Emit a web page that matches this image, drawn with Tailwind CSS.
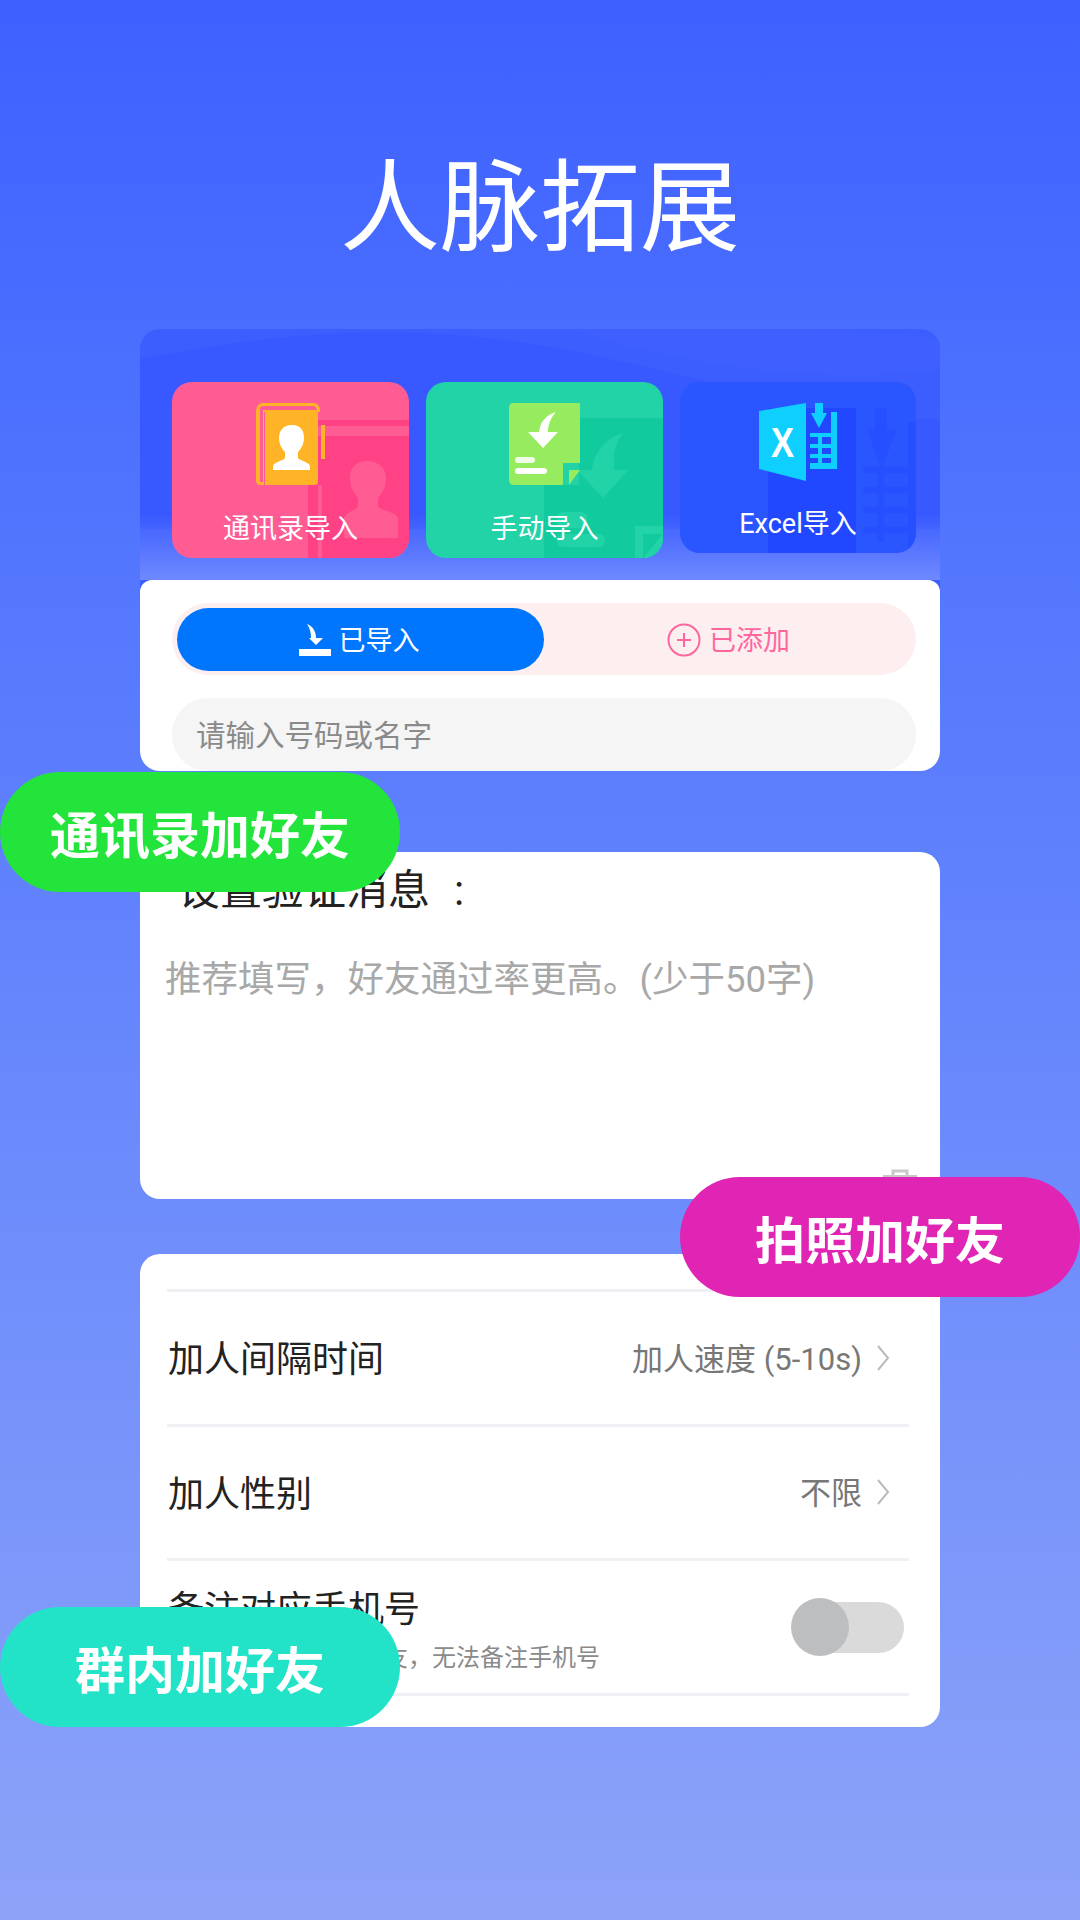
<!doctype html>
<html lang="zh-CN">
<head>
<meta charset="utf-8">
<script src="https://cdn.jsdelivr.net/npm/@tailwindcss/browser@4"></script>
</head>
<body>
<div class="relative w-[1080px] h-[1920px] overflow-hidden bg-linear-to-b from-[#3D60FF] to-[#8DA3F8] pt-[160px] font-[family-name:Roboto,'Noto_Sans_CJK_SC',sans-serif]">
  <h1 class="text-center text-white text-[100px] leading-[98px] font-normal">人脉拓展</h1>

  <!-- card 1 -->
  <section class="relative ml-[140px] mt-[71px] w-[800px] h-[442px] rounded-[20px] overflow-hidden bg-[#3C5EFF]">
    <svg class="absolute left-0 top-0" width="800" height="251" viewBox="0 0 800 251">
      <defs>
        <linearGradient id="fade" x1="0" y1="0" x2="0" y2="1">
          <stop offset="0" stop-color="#6F89FF" stop-opacity="0"/>
          <stop offset="1" stop-color="#6F89FF" stop-opacity="1"/>
        </linearGradient>
      </defs>
      <path d="M0 30 C200 -10 340 0 470 30 C590 55 690 90 800 90 V200 H0 Z" fill="#3859FF"/>
      <path d="M430 0 C500 -5 700 -5 800 10 V40 C680 60 520 30 430 0 Z" fill="#3F60FF"/>
      <rect x="0" y="185" width="800" height="66" fill="url(#fade)"/>
    </svg>
    <div class="relative flex items-start gap-[17px] pl-[32px] pt-[53px]">
      <!-- tile 1 -->
      <div class="relative w-[237px] h-[176px] rounded-[20px] overflow-hidden bg-[#FF5C94] flex flex-col items-center pt-[21px]">
        <svg class="absolute left-0 top-0" width="237" height="176" viewBox="0 0 237 176">
          <path d="M146 38 H237 V176 H136 V103 H146 Z" fill="#FF4285"/>
          <rect x="146" y="44" width="91" height="10" fill="#FF5C94"/>
          <rect x="146" y="103" width="4" height="73" fill="#FF5C94"/>
          <path d="M195 79 C183 79 178 87 178 96 C178 105 182 112 186 116 L186 124 C186 128 173 130 172 136 V156 H226 V136 C225 130 206 128 206 124 L206 116 C210 112 214 105 214 96 C214 87 207 79 195 79 Z" fill="#FF5C94"/>
        </svg>
        <svg class="relative" width="70" height="82" viewBox="84 21 70 82">
          <path d="M84 30 Q84 21 92 21 H142 Q146 21 148 27 V30 H92 V103 H88 Q84 103 84 98 Z" fill="#FFB428"/>
          <path d="M88 26 Q88 24 92 24 H141 Q144 24 145 28 H91 V100 H88 Z" fill="#FF5C94"/>
          <path d="M93 30 H146 V99 Q146 103 142 103 H93 Z" fill="#FFB428"/>
          <rect x="149" y="43" width="4" height="34" fill="#FFB428"/>
          <path d="M120 43 C111 43 107 49 107 56 C107 62 110 67 113 70 L113 76 C113 78 102 80 101 84 V88 H138 V84 C137 80 126 78 126 76 L126 70 C129 67 132 62 132 56 C132 49 129 43 120 43 Z" fill="#FFFFFF"/>
        </svg>
        <span class="relative mt-[29px] text-white text-[27px] leading-[30px]">通讯录导入</span>
      </div>
      <!-- tile 2 -->
      <div class="relative w-[237px] h-[176px] rounded-[20px] overflow-hidden bg-[#22D3A8] flex flex-col items-center pt-[21px]">
        <svg class="absolute left-0 top-0" width="237" height="176" viewBox="0 0 237 176">
          <path d="M153 36 H237 V176 H118 V103 H153 Z" fill="#11CB9E"/>
          <path d="M151 88 H166 C168 70 180 56 197 51 C188 62 187 75 188 88 H202 L177 116 Z" fill="#22D3A8"/>
          <rect x="131" y="130" width="30" height="16" rx="6" fill="#22D3A8"/>
          <rect x="131" y="152" width="48" height="13" rx="6" fill="#22D3A8"/>
          <path d="M209 144 H237 V176 H209 Z M217 152 V176 L237 152 Z" fill="#22D3A8" fill-rule="evenodd"/>
        </svg>
        <svg class="relative" width="71" height="82" viewBox="82 21 71 82">
          <path d="M86 21 H153 V81 H136 V103 H87 Q82 103 82 98 V26 Q82 21 86 21 Z" fill="#96EB5F"/>
          <path d="M142 88 H153 L142 103 Z" fill="#96EB5F"/>
          <path d="M101 50 H112 C113 40 119 33 129 30 C123 37 121 43 121 50 H131 L116 66 Z" fill="#FFFFFF"/>
          <rect x="88" y="75" width="20" height="6" rx="3" fill="#FFFFFF" fill-opacity=".85"/>
          <rect x="88" y="86" width="32" height="6" rx="3" fill="#FFFFFF"/>
        </svg>
        <span class="relative mt-[29px] text-white text-[27px] leading-[30px]">手动导入</span>
      </div>
      <!-- tile 3 -->
      <div class="relative w-[236px] h-[171px] rounded-[20px] overflow-hidden bg-[#2A56FF] flex flex-col items-center pt-[21px]">
        <svg class="absolute left-0 top-0" width="236" height="171" viewBox="0 0 236 171">
          <rect x="88" y="26" width="88" height="145" fill="#2248FF"/>
          <path d="M195 26 H207 V47 H217 L201 88 L187 47 H195 Z" fill="#2650FF"/>
          <path d="M183 88 H228 M183 108 H228 M183 128 H228 M183 148 H228 M201 88 V160" stroke="#2650FF" stroke-width="7" fill="none"/>
          <rect x="228" y="40" width="8" height="131" fill="#2650FF"/>
        </svg>
        <svg class="relative" width="78" height="78" viewBox="78 21 78 78">
          <path d="M78 29 L125 21 V99 L78 87 Z" fill="#0FCFFF"/>
          <text x="90" y="75" font-family="Liberation Sans" font-weight="700" font-size="43" fill="#FFFFFF" textLength="23" lengthAdjust="spacingAndGlyphs">X</text>
          <path d="M134 21 H142 V31 H146 L138 46 L130 31 H134 Z" fill="#0FCFFF"/>
          <path d="M129 53 H150 M129 64 H150 M129 74 H150 M139 51 V84" stroke="#0FCFFF" stroke-width="4" fill="none"/>
          <path d="M150 30 H156 V87 H129 V81 H150 Z" fill="#0FCFFF"/>
        </svg>
        <span class="relative mt-[28px] text-white text-[27px] leading-[30px]">Excel导入</span>
      </div>
    </div>
    <!-- white body -->
    <div class="absolute left-0 right-0 bottom-0 h-[191px] rounded-t-[12px] bg-white pl-[32px] pr-[24px] pt-[23px]">
      <div class="flex h-[72px] rounded-[36px] bg-[#FDEFEF] pl-[5px] pt-[5px] pb-[4px]">
        <div class="flex w-[367px] items-center justify-center gap-[8px] rounded-[32px] bg-[#0076FF] pr-[3px] text-white text-[27px]">
          <svg width="32" height="32" viewBox="0 0 32 32">
            <path d="M8 0 C14 2 17 8 17 14 H24 L17 21 L10 14 H12 C12 9 11 4 8 0 Z" fill="#FFFFFF"/>
            <rect x="0" y="25" width="32" height="7" fill="#FFFFFF"/>
          </svg>
          <span class="pt-[3px]">已导入</span>
        </div>
        <div class="flex flex-1 items-center justify-center gap-[8px] pr-[3px] text-[#FF66A0] text-[27px]">
          <svg width="34" height="34" viewBox="0 0 34 34" fill="none" stroke="#FF66A0" stroke-width="2">
            <circle cx="17" cy="17" r="15.5"/>
            <path d="M10 17 H24 M17 10 V24"/>
          </svg>
          <span class="pt-[3px]">已添加</span>
        </div>
      </div>
      <div class="mt-[23px] flex h-[73px] items-center rounded-[36px] bg-[#F5F5F5] pl-[24px] pt-[3px] text-[29.5px] text-[#8A8A8A]">请输入号码或名字</div>
    </div>
  </section>

  <!-- card 2 -->
  <section class="relative ml-[140px] mt-[81px] w-[800px] h-[347px] rounded-[20px] overflow-hidden bg-white pt-[18px]">
    <p class="pl-[38px] text-[42px] leading-[42px] text-[#222222]">设置验证消息<span class="ml-[24px]">:</span></p>
    <p class="mt-[46px] pl-[25px] text-[36.5px] leading-[44px] text-[#A8A8A8]">推荐填写，好友通过率更高。(少于50字)</p>
    <svg class="absolute left-[743px] top-[317px]" width="34" height="30" viewBox="0 0 34 30" fill="none" stroke="#C8C8C8" stroke-width="3">
      <path d="M0 7.5 H34 M10 7 V2 H24 V7"/>
    </svg>
  </section>

  <!-- card 3 -->
  <section class="ml-[140px] mt-[55px] w-[800px] h-[473px] rounded-[20px] overflow-hidden bg-white pl-[27px] pr-[31px] pt-[35px]">
    <div class="h-[3px] bg-[#EEF0F3]"></div>
    <div class="flex h-[134.6px] items-center justify-between border-b-[3px] border-[#EEF0F3] pl-[1px] pr-[19px]">
      <span class="pt-[5px] text-[36px] text-[#222222]">加人间隔时间</span>
      <span class="flex items-center gap-[14px] text-[31px] text-[#777777]"><span class="pt-[4px]">加人速度 (5-10s)</span>
        <svg width="14" height="26" viewBox="0 0 14 26" fill="none" stroke="#BBBBBB" stroke-width="2"><path d="M2 1 L12 13 L2 25"/></svg>
      </span>
    </div>
    <div class="flex h-[134.6px] items-center justify-between border-b-[3px] border-[#EEF0F3] pl-[1px] pr-[19px]">
      <span class="pt-[5px] text-[36px] text-[#222222]">加人性别</span>
      <span class="flex items-center gap-[14px] text-[31px] text-[#777777]"><span class="pt-[4px]">不限</span>
        <svg width="14" height="26" viewBox="0 0 14 26" fill="none" stroke="#BBBBBB" stroke-width="2"><path d="M2 1 L12 13 L2 25"/></svg>
      </span>
    </div>
    <div class="flex h-[134.6px] items-center justify-between border-b-[3px] border-[#EEF0F3] pl-[1px] pr-[5px]">
      <div class="flex flex-col pt-[8px]">
        <span class="text-[36px] leading-[42px] text-[#222222]">备注对应手机号</span>
        <span class="mt-[12px] pl-[216px] text-[24px] leading-[30px] text-[#8A8A8A]">友，无法备注手机号</span>
      </div>
      <div class="relative h-[58px] w-[113px]">
        <div class="absolute left-[14px] right-0 top-[4px] h-[51px] rounded-full bg-[#DADADA]"></div>
        <div class="absolute left-0 top-0 h-[58px] w-[58px] rounded-full bg-[#BDBEBF]"></div>
      </div>
    </div>
  </section>

  <!-- floating pills -->
  <div class="absolute left-0 top-[772px] flex h-[120px] w-[400px] items-center justify-center rounded-full bg-[#22E43A] pt-[10px] text-[50px] font-bold text-white">通讯录加好友</div>
  <div class="absolute right-0 top-[1177px] flex h-[120px] w-[400px] items-center justify-center rounded-full bg-[#E024B4] pt-[10px] text-[50px] font-bold text-white">拍照加好友</div>
  <div class="absolute left-0 top-[1607px] flex h-[120px] w-[400px] items-center justify-center rounded-full bg-[#22E3C8] pt-[10px] text-[50px] font-bold text-white">群内加好友</div>
</div>
</body>
</html>
